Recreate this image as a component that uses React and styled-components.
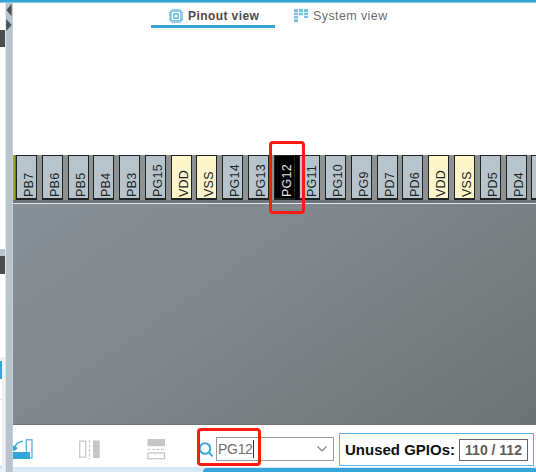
import React from "react";
import styled, { createGlobalStyle } from "styled-components";

const GlobalStyle = createGlobalStyle`
  * { box-sizing: border-box; }
  body { margin: 0; background: #fff; font-family: "Liberation Sans", Arial, sans-serif; }
`;

const Window = styled.div`
  position: relative;
  width: 536px;
  height: 472px;
  overflow: hidden;
  display: flex;
  flex-direction: column;
  background: #fff;
`;

const TopRule = styled.div`
  height: 3px;
  flex: none;
  background: #36a3d8;
  border-bottom: 1px solid #84c6e6;
`;

const Body = styled.div`
  flex: 1;
  min-height: 0;
  display: grid;
  grid-template-columns: 5px 8px 1fr;
`;

const SidePanel = styled.div`
  display: flex;
  flex-direction: column;
`;

const SideBlock = styled.div`
  height: ${(p) => p.$h}px;
  width: ${(p) => p.$w || 5}px;
  flex: none;
  background: ${(p) => p.$color};
`;

const SideList = styled.div`
  flex: 1;
  display: flex;
  flex-direction: column;
  background: #f0f1f4;
  padding-top: 4px;
`;

const Splitter = styled.div`
  background: #b8c4cb;
  border-left: 1px solid #e3e7ea;
  border-right: 1px solid #c5ced3;
  svg { display: block; }
`;

const Main = styled.div`
  min-width: 0;
  display: flex;
  flex-direction: column;
`;

const Tabs = styled.nav`
  display: flex;
  gap: 8px;
  height: 25px;
  padding-left: 138px;
  flex: none;
`;

const Tab = styled.div`
  width: 124px;
  height: 25px;
  display: flex;
  align-items: center;
  padding-left: ${(p) => (p.$active ? 18 : 11)}px;
  gap: ${(p) => (p.$active ? 5 : 5)}px;
  color: ${(p) => (p.$active ? "#4c4c4c" : "#6c6c6c")};
  font-size: ${(p) => (p.$active ? 12 : 12.5)}px;
  font-weight: ${(p) => (p.$active ? 700 : 400)};
  letter-spacing: ${(p) => (p.$active ? 0.42 : 0.4)}px;
  white-space: nowrap;
  border-bottom: ${(p) => (p.$active ? "3px solid #36a5da" : "3px solid transparent")};
  padding-top: 3px;
  svg { flex: none; }
`;

const Canvas = styled.div`
  height: 397px;
  flex: none;
  padding-top: 127px;
  display: flex;
  flex-direction: column;
  overflow: hidden;
`;

const PinRow = styled.div`
  display: flex;
  height: 45px;
  flex: none;
  background: #6d7070;
  border-left: 2px solid #94a32e;
  padding-left: 1px;
`;

const PinSlot = styled.div`
  width: 25.78px;
  flex: none;
  padding-right: 1px;
  background: ${(p) => (p.$selected ? "#000" : "#8e9291")};
`;

const Pin = styled.div`
  height: 45px;
  border: 1px solid #202323;
  border-bottom-width: 2px;
  background: ${(p) => ({ power: "#fff5cb", selected: "#000", io: "#b8c4cb" })[p.$kind]};
  color: ${(p) => (p.$kind === "selected" ? "#e4e4e4" : "#202426")};
  display: flex;
  align-items: center;
  justify-content: flex-start;
  writing-mode: vertical-rl;
  transform: rotate(180deg);
  border-top-width: 2px;
  border-bottom-width: 1px;
  padding-top: 1px;
  padding-right: 5px;
  font-size: 12.5px;
  line-height: 14px;
  letter-spacing: 0.25px;
  white-space: nowrap;
`;

const ChipEdge = styled.div`
  height: 4px;
  flex: none;
  background: #6e757a;
  border-bottom: 1px solid #e1e4e5;
`;

const Chip = styled.div`
  flex: 1;
  background: linear-gradient(145deg, #879097 0%, #7f878b 45%, #6d7273 100%);
  border-bottom: 1px solid #6e7374;
`;

const Toolbar = styled.div`
  height: 42px;
  flex: none;
  display: flex;
  align-items: flex-start;
  background: #fff;
`;

const IconGroup = styled.div`
  width: 184px;
  flex: none;
  padding-top: 14px;
  svg { display: block; }
`;

const SearchIcon = styled.svg`
  margin-top: 15px;
  flex: none;
`;

const Combo = styled.div`
  width: 118px;
  height: 24px;
  margin: 12px 5px 0 3px;
  flex: none;
  border: 1px solid #969ba0;
  display: flex;
  align-items: center;
  justify-content: space-between;
  padding: 0 5px 0 1px;
  color: #707070;
  font-size: 14px;
`;

const Query = styled.span`
  display: flex;
  align-items: center;
  height: 18px;
  border-right: 1px solid #333;
  letter-spacing: -0.3px;
`;

const Unused = styled.div`
  width: 195px;
  height: 33px;
  margin-top: 8px;
  flex: none;
  border: 1px solid #5cb5df;
  display: flex;
  align-items: center;
  justify-content: space-between;
  padding: 0 5px;
  font-size: 15px;
  font-weight: 700;
  color: #111;
  white-space: nowrap;
`;

const Count = styled.span`
  width: 69px;
  height: 22px;
  border: 1px solid #666;
  display: flex;
  align-items: center;
  justify-content: center;
  font-size: 14px;
  color: #5d5d5d;
`;

const Footer = styled.div`
  flex: 1;
  background: #d9e8f5;
  padding-left: 190px;
  display: flex;
`;

const FooterTab = styled.div`
  flex: 1;
  margin-top: 1px;
  background: #36a5da;
  border-top-left-radius: 4px;
`;

const Highlight = styled.div`
  position: absolute;
  left: ${(p) => p.$x}px;
  top: ${(p) => p.$y}px;
  width: ${(p) => p.$w}px;
  height: ${(p) => p.$h}px;
  border: 3px solid #ff1a10;
  border-radius: 4px;
`;

const PINS = "PB7 PB6 PB5 PB4 PB3 PG15 VDD VSS PG14 PG13 PG12 PG11 PG10 PG9 PD7 PD6 VDD VSS PD5 PD4".split(" ");

const kindOf = (name) =>
  name === "PG12" ? "selected" : name.startsWith("V") ? "power" : "io";

function ChipIcon() {
  return (
    <svg width="14" height="14" viewBox="0 0 14 14" fill="none" stroke="#49aedd">
      <rect x="2" y="2" width="10" height="10" strokeWidth="1.2" />
      <rect x="4.8" y="4.8" width="4.4" height="4.4" strokeWidth="1.2" />
      <path d="M3 .6h9M3 13.4h9M.6 3v9M13.4 3v9" strokeDasharray="1.2 1" strokeWidth="1.2" />
    </svg>
  );
}

function SystemIcon() {
  return (
    <svg width="14" height="14" viewBox="0 0 14 14" fill="#79c2e5">
      <path d="M0 0h4v3H0zM0 3.7h4v2.6H0zM0 7h4v2.6H0zM0 10.3h4V13H0zM5 0h4v3H5zM5 3.7h4v2.6H5zM10 0h4v3h-4zM10 3.7h4v2.6h-4zM10 7h4v2h-4z" />
    </svg>
  );
}

function LayoutIcons() {
  return (
    <svg width="160" height="22" viewBox="0 0 160 22" fill="none">
      <rect x="13.3" y=".8" width="5.7" height="18" stroke="#56b4df" strokeWidth="1.3" />
      <rect x="0" y="13" width="17" height="7" fill="#36a5da" />
      <path d="M10 2.3Q3.5 3 1.7 8.5" stroke="#45acdc" strokeWidth="1.6" />
      <path d="M0 6.5 5 9 1 12.2 0 11z" fill="#36a5da" />
      <rect x="66.7" y="2.2" width="6" height="16" stroke="#c9c9c9" strokeWidth="1.3" />
      <path d="M76.4 1v19" stroke="#c3c3c3" strokeDasharray="3 1.5" />
      <rect x="80" y="1.5" width="6.7" height="17.5" fill="#c6c6c6" />
      <rect x="134.5" y="0" width="17.5" height="7.2" fill="#c6c6c6" />
      <path d="M134.5 10.4H153" stroke="#c3c3c3" strokeDasharray="3 1.5" />
      <rect x="135" y="14" width="16.5" height="5.7" stroke="#c6c6c6" strokeWidth="1.3" />
    </svg>
  );
}

export default function App() {
  return (
    <Window>
      <GlobalStyle />
      <TopRule />
      <Body>
        <SidePanel>
          <SideBlock $h={27} $color="#fff" />
          <SideBlock $h={17} $color="#4c4c4b" />
          <SideBlock $h={202} $color="#fff" />
          <SideBlock $h={7} $color="#b8c4cb" />
          <SideBlock $h={18} $color="#4c4c4b" />
          <SideBlock $h={83} $color="#fff" />
          <SideList>
            <SideBlock $h={18} $w={2} $color="#36a5da" />
            <SideBlock $h={20} $w={2} $color="#fff" />
            <SideBlock $h={1} $w={2} $color="#dfe2e5" />
            <SideBlock $h={65} $w={2} $color="#fff" />
            <SideBlock $h={4} $w={2} $color="#d3e5f4" />
          </SideList>
        </SidePanel>
        <Splitter>
          <svg width="6" height="30" viewBox="0 0 6 30">
            <path d="M5.6 1v12L.3 7z M.2 16l5.5 6-5.5 6z" fill="#4c5153" />
          </svg>
        </Splitter>
        <Main>
          <Tabs>
            <Tab $active><ChipIcon />Pinout view</Tab>
            <Tab><SystemIcon />System view</Tab>
          </Tabs>
          <Canvas>
            <PinRow>
              {PINS.map((name, i) => (
                <PinSlot key={i} $selected={name === "PG12"}>
                  <Pin $kind={kindOf(name)}>{name}</Pin>
                </PinSlot>
              ))}
              <PinSlot><Pin $kind="io" /></PinSlot>
            </PinRow>
            <ChipEdge />
            <Chip />
          </Canvas>
          <Toolbar>
            <IconGroup><LayoutIcons /></IconGroup>
            <SearchIcon width="16" height="18" viewBox="0 0 16 18" fill="none" stroke="#3fa9da" strokeWidth="2">
              <circle cx="8" cy="8.5" r="5.3" />
              <path d="m11.8 12.3 3.8 4" />
            </SearchIcon>
            <Combo>
              <Query>PG12</Query>
              <svg width="12" height="8" viewBox="0 0 12 8" fill="none" stroke="#808080" strokeWidth="1.2">
                <path d="m1.5 1.5 4.5 4.5 4.5-4.5" />
              </svg>
            </Combo>
            <Unused>
              Unused GPIOs:
              <Count>110 / 112</Count>
            </Unused>
          </Toolbar>
          <Footer><FooterTab /></Footer>
        </Main>
      </Body>
      <Highlight $x={269} $y={141} $w={36} $h={73} />
      <Highlight $x={197} $y={428} $w={64} $h={38} />
    </Window>
  );
}
